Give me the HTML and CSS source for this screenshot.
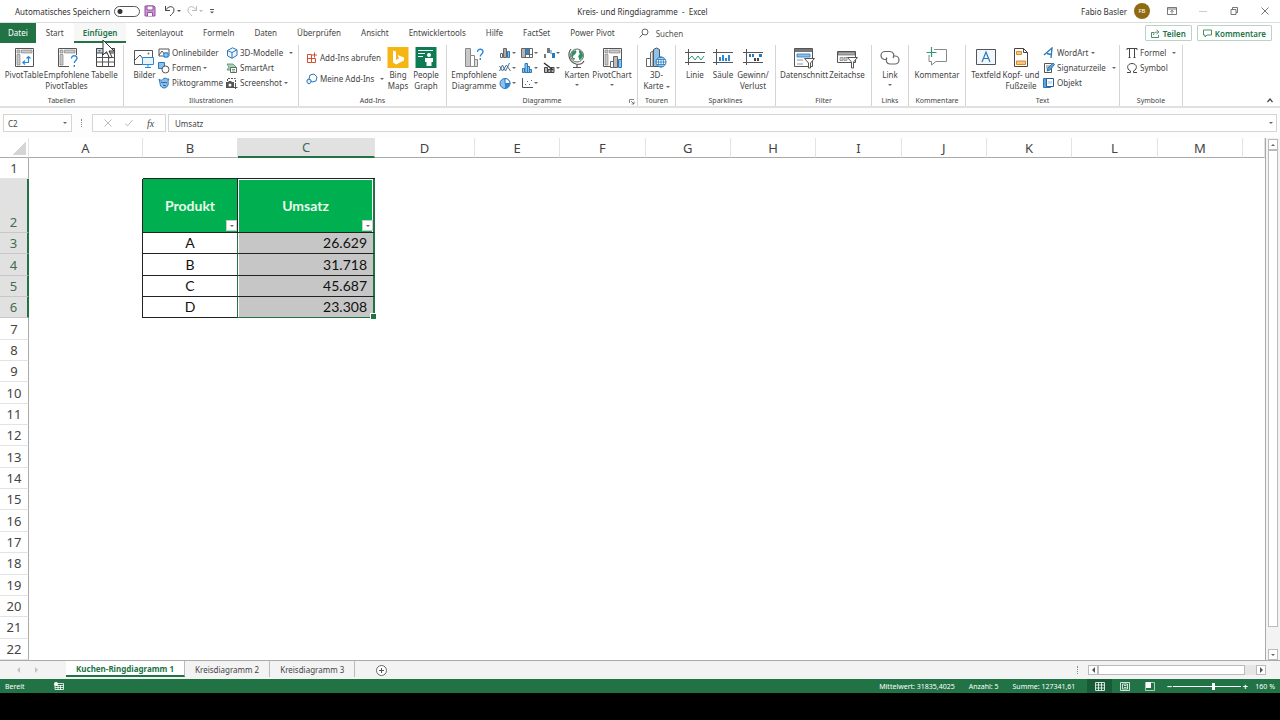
FILE: index.html
```html
<!DOCTYPE html>
<html lang="de">
<head>
    <meta charset="UTF-8">
    <meta name="viewport" content="width=device-width, initial-scale=1.0">
    <title>Kreis- und Ringdiagramme - Excel</title>
    <link rel="stylesheet" href="styles.css">
</head>
<body>

<!-- Titelleiste -->
<header class="titlebar">
    <div class="quick">
        <label for="autosave">Automatisches Speichern</label>
        <input type="checkbox" id="autosave" class="toggle">
        <button class="icon-btn save" aria-label="Speichern">
            <svg width="12" height="12" viewBox="0 0 12 12"><path d="M1 1h9l1 1v9H1z" fill="#c79ad0" stroke="#9b4fa5"/><path d="M3 1h6v4H3z" fill="#fff" stroke="#9b4fa5"/><path d="M3.500 11V7.500h5V11" fill="#fff" stroke="#9b4fa5"/></svg>
        </button>
        <button class="icon-btn" aria-label="Rückgängig">
            <svg width="18" height="12" viewBox="0 0 18 12"><path d="M1.500 1v4.500H6M1.500 5.500C4 .5 10 .5 10 5c0 2.500-2 4-4 6" fill="none" stroke="#444"/><path d="M13 5h4l-2 2z" fill="#555"/></svg>
        </button>
        <button class="icon-btn" aria-label="Wiederholen">
            <svg width="18" height="12" viewBox="0 0 18 12"><path d="M10.500 1v4.500H6M10.500 5.500C8 .5 2 .5 2 5c0 2.500 2 4 4 6" fill="none" stroke="#bbb"/><path d="M13 5h4l-2 2z" fill="#bbb"/></svg>
        </button>
        <button class="icon-btn" aria-label="Symbolleiste anpassen">
            <svg width="8" height="8" viewBox="0 0 8 8"><path d="M2 2.500h4" stroke="#555"/><path d="M2 4.500h4l-2 2z" fill="#555"/></svg>
        </button>
    </div>
    <div class="doc-title">Kreis- und Ringdiagramme&nbsp; -&nbsp; Excel</div>
    <div class="account">
        <span>Fabio Basler</span>
        <span class="avatar">FB</span>
        <button class="icon-btn" aria-label="Menüband anzeigen">
            <svg width="10" height="8" viewBox="0 0 10 8"><path d="M.5.500h9v7h-9zM.5 2h9M5 6.500V3.500M3.500 4.800 5 3.300l1.500 1.500" fill="none" stroke="#555" stroke-width=".8"/></svg>
        </button>
        <button class="icon-btn" aria-label="Minimieren">
            <svg width="10" height="8" viewBox="0 0 10 8"><path d="M1 4.500h8" stroke="#ccc"/></svg>
        </button>
        <button class="icon-btn" aria-label="Verkleinern">
            <svg width="10" height="8" viewBox="0 0 10 8"><path d="M2 2.500h5v5H2zM3.500 2.500v-2h5v5H7" fill="none" stroke="#555" stroke-width=".8"/></svg>
        </button>
        <button class="icon-btn" aria-label="Schließen">
            <svg width="10" height="8" viewBox="0 0 10 8"><path d="m1.500.500 7 7m0-7-7 7" stroke="#555" stroke-width=".8"/></svg>
        </button>
    </div>
</header>

<!-- Registerkarten -->
<nav class="tabs">
    <button class="tab file">Datei</button>
    <button class="tab">Start</button>
    <button class="tab active">Einfügen
        <svg class="cursor" width="13" height="21" viewBox="0 0 13 21"><path d="M1 1v15l3.500-3.300L7.500 19l2.400-1.100L7 12h5z" fill="#fff" stroke="#333"/></svg>
    </button>
    <button class="tab">Seitenlayout</button>
    <button class="tab">Formeln</button>
    <button class="tab">Daten</button>
    <button class="tab">Überprüfen</button>
    <button class="tab">Ansicht</button>
    <button class="tab">Entwicklertools</button>
    <button class="tab">Hilfe</button>
    <button class="tab">FactSet</button>
    <button class="tab">Power Pivot</button>
    <label class="search">
        <svg width="10" height="10" viewBox="0 0 10 10"><circle cx="6" cy="4" r="3" fill="none" stroke="#666"/><path d="M4 6 .5 9.500" stroke="#666"/></svg>
        <input type="text" placeholder="Suchen" aria-label="Suchen">
    </label>
    <div class="share">
        <button class="share-btn">
            <svg width="9" height="9" viewBox="0 0 9 9"><path d="M3 3.500H.5v5h7V6M2.500 6c0-2 1.500-3 4-3M5.500 1l2.500 2-2.500 2" fill="none" stroke="#217346" stroke-width=".8"/></svg>
            Teilen
        </button>
        <button class="share-btn">
            <svg width="9" height="9" viewBox="0 0 9 9"><path d="M.5 1h8v5H4L2 8V6H.5z" fill="none" stroke="#217346" stroke-width=".8"/></svg>
            Kommentare
        </button>
    </div>
</nav>

<!-- Menüband -->
<div class="ribbon">
    <section class="group">
        <div class="group-body tables">
            <button class="big">
                <svg width="22" height="22" viewBox="0 0 22 22"><path d="M2.500 1.500h18v18h-18z" fill="#fff" stroke="#555"/><path d="M4 3h3v3H4zM8.500 3H19v3H8.500zM4 7.500h3V18H4z" fill="#c8c8c8" stroke="#777" stroke-width=".6"/><path d="M10 15.500h5.500V10M12 13.500l-2.200 2 2.200 2M13.500 11.500l2-2 2 2" fill="none" stroke="#2b88d8" stroke-width="1.200"/></svg>
                <span>PivotTable</span>
            </button>
            <button class="big">
                <svg width="22" height="22" viewBox="0 0 22 22"><path d="M13 19.500H2.500v-18h18V8" fill="#fff" stroke="#555"/><path d="M4 3h3v3H4zM8.500 3H19v3H8.500zM4 7.500h3V18H4z" fill="#c8c8c8" stroke="#777" stroke-width=".6"/><path d="M15.500 11.500c0-4 6-3.500 5.500 0-.3 2-2.700 2-2.700 4.500M18.300 18v2" fill="none" stroke="#2b88d8" stroke-width="1.400"/></svg>
                <span>Empfohlene PivotTables</span>
            </button>
            <button class="big">
                <svg width="22" height="22" viewBox="0 0 22 22"><path d="M2.500 1.500h18v18h-18z" fill="#fff" stroke="#444"/><path d="M2.500 1.500h18V6h-18z" fill="#cfcfcf" stroke="#444"/><path d="M2.500 10.500h18M2.500 15h18M8.500 6v13.500M14.500 6v13.500" stroke="#555"/><path d="M4 3h3L5.500 5z" fill="#2b88d8"/></svg>
                <span>Tabelle</span>
            </button>
        </div>
        <h2>Tabellen</h2>
    </section>

    <section class="group">
        <div class="group-body pictures">
            <button class="big">
                <svg width="22" height="22" viewBox="0 0 22 22"><path d="M1.500 3.500h18v14h-18z" fill="#fff" stroke="#555"/><path d="M2 13l5-5 4 5 2-2" fill="none" stroke="#555"/><circle cx="15.500" cy="6.500" r="1" fill="#777"/><path d="M9.500 10.500h11v7h-11z" fill="#e8f3fc" stroke="#2b88d8"/><path d="M15 17.500V20M12 20.500h6" stroke="#2b88d8"/></svg>
                <span>Bilder</span>
            </button>
            <div class="stack">
                <button class="small">
                    <svg width="12" height="12" viewBox="0 0 12 12"><path d="M1 2h10v7H1z" fill="#fff" stroke="#555"/><path d="m1 8 3-4 3 4" fill="none" stroke="#555"/><circle cx="8" cy="8" r="3" fill="#2b88d8"/><path d="M5.500 8h5M8 5.500v5" stroke="#fff" stroke-width=".6"/></svg>
                    Onlinebilder
                </button>
                <button class="small">
                    <svg width="12" height="12" viewBox="0 0 12 12"><path d="M.5.500h6v6h-6z" fill="#8ec2ee" stroke="#2b78b8"/><circle cx="7.500" cy="7.500" r="3.500" fill="#fff" stroke="#555"/></svg>
                    Formen <i class="caret"></i>
                </button>
                <button class="small">
                    <svg width="12" height="12" viewBox="0 0 12 12"><path d="M1 2c2 2 4 1 4 0l2-1 2 1 2 0-1 2c1 4-1 7-4 7-3 0-4-3-4-5z" fill="#8ec2ee" stroke="#2b78b8"/><path d="M3 5c3 2 3-1 6 1M5 8l3 1" fill="none" stroke="#2b5f90"/></svg>
                    Piktogramme
                </button>
            </div>
            <div class="stack">
                <button class="small">
                    <svg width="12" height="12" viewBox="0 0 12 12"><path d="m6.500.800 4.500 2v5.500l-5 3-4.500-2.500V3.500zM1.500 3.500 6 5.500l5-2.700M6 5.500v5.800" fill="#eef6fd" stroke="#2b78b8"/></svg>
                    3D-Modelle <i class="caret far"></i>
                </button>
                <button class="small">
                    <svg width="12" height="12" viewBox="0 0 12 12"><path d="M1 2h6l3 3-3 3H1l2-3z" fill="#a8d5b8" stroke="#4a8a66" stroke-width=".8"/><path d="M4.500 5.500h6v5h-6z" fill="#fff" stroke="#666"/><path d="M6 7.500h3M6 9h3" stroke="#3a9a66" stroke-width=".8"/></svg>
                    SmartArt
                </button>
                <button class="small">
                    <svg width="12" height="12" viewBox="0 0 12 12"><path d="M1.500 4V1.500h8V8" fill="none" stroke="#555" stroke-dasharray="2 1"/><path d="M0 5h2l1-1h2l1 1h2v6H0z" fill="#555"/><circle cx="4" cy="8" r="1.500" fill="#fff"/><path d="M9.500 8v4M7.500 10.500h4" stroke="#555"/></svg>
                    Screenshot <i class="caret"></i>
                </button>
            </div>
        </div>
        <h2>Illustrationen</h2>
    </section>

    <section class="group">
        <div class="group-body addins">
            <div class="stack wide">
                <button class="small">
                    <svg width="12" height="12" viewBox="0 0 12 12"><path d="M1.500 2.500H5.500v8H1.500zM1.500 6.500h8v4h-4M8.500.500v5M6 3h5" fill="none" stroke="#d2502f"/></svg>
                    Add-Ins abrufen
                </button>
                <button class="small">
                    <svg width="12" height="12" viewBox="0 0 12 12"><path d="m4 2 4-1 3 3-1 4-4 1-3-3z" fill="#fff" stroke="#2b78b8"/><path d="m1 7 2-1 2 1v2.500L3 11l-2-1.500z" fill="#dcecf9" stroke="#2b78b8"/></svg>
                    Meine Add-Ins <i class="caret far"></i>
                </button>
            </div>
            <button class="big">
                <svg width="22" height="22" viewBox="0 0 22 22"><path d="M.5 0h21v21H.5z" fill="#f5b513"/><path d="m6 3.500 3 1V13l3-1.500-1.500-3.500 6.500 2.500v3L9 17.500l-3-2z" fill="#fff"/></svg>
                <span>Bing Maps</span>
            </button>
            <button class="big">
                <svg width="22" height="22" viewBox="0 0 22 22"><path d="M.5 0h21v21H.5z" fill="#0e7c53"/><path d="M3 3.500h15M3 6.500h7M3 9.500h5" stroke="#fff"/><circle cx="14" cy="8" r="2" fill="#fff"/><path d="M10 11h8v4h-1.500v4h-5v-4H10z" fill="#fff"/></svg>
                <span>People Graph</span>
            </button>
        </div>
        <h2>Add-Ins</h2>
    </section>

    <section class="group">
        <div class="group-body charts">
            <button class="big">
                <svg width="22" height="22" viewBox="0 0 22 22"><path d="M2.500 1.500h5v18h-5z" fill="#c8c8c8" stroke="#888"/><path d="M7.500 8.500h4v11h-4z" fill="#fff" stroke="#888"/><path d="M11.500 12.500h3v7h-3z" fill="#ddd" stroke="#888"/><path d="M14.500 5c0-4 6-3.500 5.500 0-.3 2-2.700 2-2.700 4.500M17.300 11v2" fill="none" stroke="#2b88d8" stroke-width="1.400"/></svg>
                <span>Empfohlene Diagramme</span>
            </button>
            <div class="chart-grid">
                <button class="mini" aria-label="Säulendiagramm"><svg width="12" height="12" viewBox="0 0 12 12"><path d="M1.500 6.500h2v4h-2z" fill="#fff" stroke="#666"/><path d="M4.500 1.500h3v9h-3z" fill="#aaa" stroke="#666"/><path d="M8.500 4.500h2v6h-2z" fill="#8ec2ee" stroke="#2b78b8"/></svg><i class="caret"></i></button>
                <button class="mini" aria-label="Hierarchiediagramm"><svg width="12" height="12" viewBox="0 0 12 12"><path d="M.5 1.500h11v9H.5z" fill="#fff" stroke="#666"/><path d="M1 2h3v8H1z" fill="#b5b5b5"/><path d="M5 2h3v5H5z" fill="#2b88d8"/><path d="M4.500 1.500v9M8.500 1.500v9M4.500 7.500h7" stroke="#666"/></svg><i class="caret"></i></button>
                <button class="mini" aria-label="Wasserfalldiagramm"><svg width="12" height="12" viewBox="0 0 12 12"><path d="M1 7h2v4H1zM4 1h3v5H4z" fill="#777"/><path d="M7 3h2v4H7z" fill="#8ec2ee"/><path d="M9 6h3v5H9z" fill="#2b78b8"/></svg><i class="caret"></i></button>
                <button class="mini" aria-label="Liniendiagramm"><svg width="12" height="12" viewBox="0 0 12 12"><path d="m.5 9 3-6 3 6 4-8" fill="none" stroke="#2b78b8"/><path d="m.5 4 3 5 4-6 4 6" fill="none" stroke="#666"/></svg><i class="caret"></i></button>
                <button class="mini" aria-label="Statistikdiagramm"><svg width="12" height="12" viewBox="0 0 12 12"><path d="M1.500 6.500h2v4h-2zM4 1.500h2.500v9H4zM6.500 4.500h2v6h-2zM8.500 7.500h2v3h-2z" fill="#8ec2ee" stroke="#2b78b8"/></svg><i class="caret"></i></button>
                <button class="mini" aria-label="Kombidiagramm"><svg width="12" height="12" viewBox="0 0 12 12"><path d="M1.500 5.500h3v5h-3zM5 7.500h3v3H5zM8 5.500h3v5H8z" fill="#bbb" stroke="#444"/><path d="m1 1 4 3 5 4" fill="none" stroke="#333" stroke-width="1.500"/></svg><i class="caret"></i></button>
                <button class="mini" aria-label="Kreisdiagramm"><svg width="12" height="12" viewBox="0 0 12 12"><circle cx="6" cy="6.500" r="5" fill="#8ec2ee" stroke="#2b78b8"/><path d="M6 1.500v5h5A5 5 0 0 0 6 1.500z" fill="#fff" stroke="#2b78b8"/><path d="M6 6.500h5A5 5 0 0 1 6 11.500z" fill="#2b88d8"/></svg><i class="caret"></i></button>
                <button class="mini" aria-label="Punktdiagramm"><svg width="12" height="12" viewBox="0 0 12 12"><path d="M1.500 1v9.500H12" fill="none" stroke="#555"/><path d="M4 7h1v1H4zM6 4h1v1H6zM8 7h1v1H8zM10 3h1v1h-1z" fill="#2b78b8"/></svg><i class="caret"></i></button>
            </div>
            <button class="big">
                <svg width="22" height="22" viewBox="0 0 22 22"><circle cx="11" cy="8.500" r="6.500" fill="#fff" stroke="#666"/><path d="M7 4c3-2 4 0 3 2s-3 2-3 4 2 0 2 2l-1 1C5 11 4 7 7 4zM13 3c3 1 4 4 4 6-1 2-2 4-4 4 1-2-2-3 0-5 2-1-1-3 0-5z" fill="#2f8f60"/><path d="M5 2C1 7 3 15 10 17c4 1 7-1 8-3M11 17v3M7 20.500h8" fill="none" stroke="#555" stroke-width="1.200"/></svg>
                <span>Karten</span><i class="caret"></i>
            </button>
            <button class="big">
                <svg width="22" height="22" viewBox="0 0 22 22"><path d="M2.500 1.500h18v18h-18z" fill="#fff" stroke="#555"/><path d="M4 3h3v3H4zM8.500 3H19v3H8.500zM4 7.500h3V18H4z" fill="#c8c8c8" stroke="#777" stroke-width=".6"/><path d="M9.500 14.500h3v6h-3z" fill="#fff" stroke="#666"/><path d="M12.500 9.500h4v11h-4z" fill="#bbb" stroke="#666"/><path d="M17.500 12.500h3v8h-3z" fill="#8ec2ee" stroke="#2b78b8"/></svg>
                <span>PivotChart</span><i class="caret"></i>
            </button>
        </div>
        <h2>Diagramme</h2>
        <button class="launcher" aria-label="Alle Diagramme">
            <svg width="6" height="6" viewBox="0 0 6 6"><path d="M.5 4V.500H5M2 2l3 3M5 2.500V5H2.500" fill="none" stroke="#666" stroke-width=".8"/></svg>
        </button>
    </section>

    <section class="group">
        <div class="group-body">
            <button class="big">
                <svg width="22" height="22" viewBox="0 0 22 22"><path d="M1.500 11.500h4v8h-4z" fill="#fff" stroke="#666"/><path d="M5.500 5.500 8 4v15.500H5.500z" fill="#eee" stroke="#666"/><path d="m8.500 2.500 3-1.500 3 1.500v17h-6z" fill="#8ec2ee" stroke="#555"/><circle cx="16" cy="15" r="5" fill="#fff" stroke="#2b78b8"/><path d="M11 15h10M16 10v10M12 12.500h8M12 17.500h8" stroke="#2b78b8" stroke-width=".8"/><ellipse cx="16" cy="15" rx="2.500" ry="5" fill="none" stroke="#2b78b8" stroke-width=".8"/></svg>
                <span class="lines">3D-<br>Karte <i class="caret"></i></span>
            </button>
        </div>
        <h2>Touren</h2>
    </section>

    <section class="group">
        <div class="group-body sparks">
            <button class="big">
                <svg width="22" height="22" viewBox="0 0 22 22"><path d="M1 5.500h20M1 15.500h20M4.500 2v16" stroke="#555"/><path d="m5 12 3-3 3 4 3-4 3 4 3-4" fill="none" stroke="#2f9a70"/></svg>
                <span>Linie</span>
            </button>
            <button class="big">
                <svg width="22" height="22" viewBox="0 0 22 22"><path d="M1 5.500h20M1 15.500h20M4.500 2v16" stroke="#555"/><path d="M7 10h2v4H7zM10 8h2v6h-2zM13 11h2v3h-2zM16 8h2v6h-2z" fill="#2b88d8"/></svg>
                <span>Säule</span>
            </button>
            <button class="big">
                <svg width="22" height="22" viewBox="0 0 22 22"><path d="M1 5.500h20M1 15.500h20M4.500 2v16" stroke="#555"/><path d="M7 7h2v3H7zM10 7h2v3h-2zM17 7h3v3h-3z" fill="#2b78b8"/><path d="M12 11h2v3h-2zM15 11h2v3h-2z" fill="#444"/></svg>
                <span>Gewinn/ Verlust</span>
            </button>
        </div>
        <h2>Sparklines</h2>
    </section>

    <section class="group">
        <div class="group-body filters">
            <button class="big">
                <svg width="22" height="22" viewBox="0 0 22 22"><path d="M1.500 1.500h18v18h-18z" fill="#fff" stroke="#555"/><path d="M2 2h17v3H2z" fill="#777"/><path d="M4 7h13v3H4z" fill="#8ec2ee" stroke="#2b78b8" stroke-width=".8"/><path d="M4 12h6v2H4zM4 16h6v2H4z" fill="#c8c8c8"/><path d="M11.500 11.500h10l-4 4.500v5h-2v-5z" fill="#fff" stroke="#555"/></svg>
                <span>Datenschnitt</span>
            </button>
            <button class="big">
                <svg width="22" height="22" viewBox="0 0 22 22"><path d="M1.500 4.500h18v11h-18z" fill="#fff" stroke="#555"/><path d="M2 5h17v3H2z" fill="#aaa" stroke="#555" stroke-width=".6"/><path d="M4 10.500h3v3H4zM8 10.500h3v3H8z" fill="#ccc" stroke="#777" stroke-width=".6"/><path d="M11.500 10.500h10l-4 4.500v6h-2v-6z" fill="#fff" stroke="#555"/></svg>
                <span>Zeitachse</span>
            </button>
        </div>
        <h2>Filter</h2>
    </section>

    <section class="group">
        <div class="group-body">
            <button class="big">
                <svg width="22" height="22" viewBox="0 0 22 22"><path d="M8 12.500H6a4 4 0 0 1 0-8h5a4 4 0 0 1 3 6.500M14 9h2a4 4 0 0 1 0 8h-5a4 4 0 0 1-3-6.500" fill="none" stroke="#666" stroke-width="1.200"/></svg>
                <span>Link</span><i class="caret"></i>
            </button>
        </div>
        <h2>Links</h2>
    </section>

    <section class="group">
        <div class="group-body">
            <button class="big">
                <svg width="22" height="22" viewBox="0 0 22 22"><path d="M8 2.500h12.500v12H10L5.500 18v-3.500H3V8" fill="#fff" stroke="#888"/><path d="M5.500 0v10M.5 5.500h10" stroke="#2f9a70" stroke-width="1.200"/></svg>
                <span>Kommentar</span>
            </button>
        </div>
        <h2>Kommentare</h2>
    </section>

    <section class="group">
        <div class="group-body texts">
            <button class="big">
                <svg width="22" height="22" viewBox="0 0 22 22"><path d="M1.500 2.500h19v15h-19z" fill="#f1f7fc" stroke="#555"/><path d="m7 15 4-10 4 10M8.500 11.500h5" fill="none" stroke="#2b78b8" stroke-width="1.200"/></svg>
                <span>Textfeld</span>
            </button>
            <button class="big">
                <svg width="22" height="22" viewBox="0 0 22 22"><path d="M4.500 1.500h9l4 4v14h-13z" fill="#fff" stroke="#444"/><path d="M13.500 1.500v4h4" fill="none" stroke="#444"/><path d="M6.500 4.500h5v3h-5zM6.500 14h9v3.500h-9z" fill="#f7c68a" stroke="#e08a1e"/></svg>
                <span class="lines">Kopf- und<br>Fußzeile</span>
            </button>
            <div class="stack">
                <button class="small">
                    <svg width="12" height="12" viewBox="0 0 12 12"><path d="M1 8 9 1 8 11M4 6.500l4 1" fill="none" stroke="#2b78b8" stroke-width="1.300"/></svg>
                    WordArt <i class="caret"></i>
                </button>
                <button class="small">
                    <svg width="12" height="12" viewBox="0 0 12 12"><path d="M1.500 1.500h7v9h-7z" fill="#fff" stroke="#555"/><path d="M3 4h4M3 6h3" stroke="#777"/><path d="m4 9 1-3 5-5 1.500 1.500L7 8z" fill="#5aa5e0" stroke="#2b78b8"/></svg>
                    Signaturzeile <i class="caret far"></i>
                </button>
                <button class="small">
                    <svg width="12" height="12" viewBox="0 0 12 12"><path d="M.5 1.500h7v9h-7z" fill="#5aa5e0" stroke="#2b78b8"/><path d="M3.500 1.500h7v8h-7z" fill="#fff" stroke="#2b5f90"/><path d="M5 4h4v3H5z" fill="#c8ddf0"/></svg>
                    Objekt
                </button>
            </div>
        </div>
        <h2>Text</h2>
    </section>

    <section class="group">
        <div class="group-body symbols">
            <div class="stack">
                <button class="small">
                    <svg width="12" height="12" viewBox="0 0 12 12"><path d="M1 3V1.500h10V3M3.500 1.500v9M8.500 1.500v9M2.500 10.500h2M7.500 10.500h2" fill="none" stroke="#444"/></svg>
                    Formel <i class="caret far"></i>
                </button>
                <button class="small">
                    <svg width="12" height="12" viewBox="0 0 12 12"><path d="M1 10.500h3.500V9C0 7 1 1.500 6 1.500S12 7 7.500 9v1.500H11" fill="none" stroke="#444"/></svg>
                    Symbol
                </button>
            </div>
        </div>
        <h2>Symbole</h2>
    </section>

    <button class="collapse" aria-label="Menüband reduzieren">
        <svg width="6" height="5" viewBox="0 0 6 5"><path d="m.5 4 2.500-3 2.500 3" fill="none" stroke="#444" stroke-width="1.200"/></svg>
    </button>
</div>

<!-- Bearbeitungsleiste -->
<div class="formula-bar">
    <div class="name-box">
        <input type="text" value="C2" aria-label="Namenfeld">
        <i class="caret"></i>
    </div>
    <span class="dots"></span>
    <div class="fx">
        <button class="icon-btn" aria-label="Abbrechen"><svg width="8" height="8" viewBox="0 0 8 8"><path d="m.5.500 7 7m0-7-7 7" stroke="#bbb"/></svg></button>
        <button class="icon-btn" aria-label="Eingeben"><svg width="8" height="8" viewBox="0 0 8 8"><path d="m.5 4.500 2 2.500 5-6" fill="none" stroke="#bbb"/></svg></button>
        <button class="icon-btn fn" aria-label="Funktion einfügen">fx</button>
    </div>
    <div class="formula">
        <input type="text" value="Umsatz" aria-label="Bearbeitungsleiste">
        <i class="caret"></i>
    </div>
</div>

<!-- Tabellenblatt -->
<main class="sheet">
    <div class="grid-area">
    <table class="grid">
        <colgroup>
            <col class="col-num"><col class="col-a"><col class="col-b"><col class="col-c"><col class="col-d">
            <col span="9"><col class="col-rest">
        </colgroup>
        <tr class="letters">
            <th class="corner"></th>
            <th>A</th><th>B</th><th class="sel">C</th><th>D</th><th>E</th><th>F</th><th>G</th>
            <th>H</th><th>I</th><th>J</th><th>K</th><th>L</th><th>M</th><th></th>
        </tr>
        <tr class="first"><th>1</th><td></td><td class="above"></td><td class="above"></td><td colspan="11"></td></tr>
        <tr class="head sel">
            <th>2</th><td class="edge"></td>
            <td class="title">Produkt<button class="filter" aria-label="Produkt filtern"><i class="caret"></i></button></td>
            <td class="title picked">Umsatz<button class="filter" aria-label="Umsatz filtern"><i class="caret"></i></button></td>
            <td colspan="11"></td>
        </tr>
        <tr class="sel"><th>3</th><td class="edge"></td><td class="name">A</td><td class="value">26.629</td><td colspan="11"></td></tr>
        <tr class="sel"><th>4</th><td class="edge"></td><td class="name">B</td><td class="value">31.718</td><td colspan="11"></td></tr>
        <tr class="sel"><th>5</th><td class="edge"></td><td class="name">C</td><td class="value">45.687</td><td colspan="11"></td></tr>
        <tr class="sel"><th>6</th><td class="edge"></td><td class="name">D</td><td class="value last">23.308</td><td colspan="11"></td></tr>
        <tr><th>7</th><td colspan="14"></td></tr>
        <tr><th>8</th><td colspan="14"></td></tr>
        <tr><th>9</th><td colspan="14"></td></tr>
        <tr><th>10</th><td colspan="14"></td></tr>
        <tr><th>11</th><td colspan="14"></td></tr>
        <tr><th>12</th><td colspan="14"></td></tr>
        <tr><th>13</th><td colspan="14"></td></tr>
        <tr><th>14</th><td colspan="14"></td></tr>
        <tr><th>15</th><td colspan="14"></td></tr>
        <tr><th>16</th><td colspan="14"></td></tr>
        <tr><th>17</th><td colspan="14"></td></tr>
        <tr><th>18</th><td colspan="14"></td></tr>
        <tr><th>19</th><td colspan="14"></td></tr>
        <tr><th>20</th><td colspan="14"></td></tr>
        <tr><th>21</th><td colspan="14"></td></tr>
        <tr><th>22</th><td colspan="14"></td></tr>
    </table>
    </div>
    <div class="vscroll">
        <button class="arrow" aria-label="Nach oben"><i class="caret up"></i></button>
        <div class="thumb"></div>
        <button class="arrow" aria-label="Nach unten"><i class="caret"></i></button>
    </div>
</main>

<!-- Blattregister -->
<div class="sheet-tabs">
    <div class="sheet-nav">
        <button class="icon-btn" aria-label="Vorheriges Blatt"><i class="caret left"></i></button>
        <button class="icon-btn" aria-label="Nächstes Blatt"><i class="caret right"></i></button>
    </div>
    <button class="sheet-tab active">Kuchen-Ringdiagramm 1</button>
    <button class="sheet-tab">Kreisdiagramm 2</button>
    <button class="sheet-tab">Kreisdiagramm 3</button>
    <button class="icon-btn add" aria-label="Neues Blatt">
        <svg width="11" height="11" viewBox="0 0 11 11"><circle cx="5.500" cy="5.500" r="5" fill="#fff" stroke="#666"/><path d="M5.500 3v5M3 5.500h5" stroke="#555"/></svg>
    </button>
    <span class="dots"></span>
    <div class="hscroll">
        <button class="arrow" aria-label="Nach links"><i class="caret left"></i></button>
        <div class="track"><div class="thumb"></div></div>
        <button class="arrow" aria-label="Nach rechts"><i class="caret right"></i></button>
    </div>
</div>

<!-- Statusleiste -->
<footer class="status">
    <span>Bereit</span>
    <svg class="macro" width="10" height="8" viewBox="0 0 10 8"><path d="M1 1.500h8.500v6H1zM1 3.500h8.500M1 5.500h8.500M4 3v5M6.500 3v5" fill="none" stroke="#fff" stroke-width=".8"/><circle cx="2" cy="2" r="2" fill="#fff"/></svg>
    <div class="stats">
        <span>Mittelwert: 31835,4025</span>
        <span>Anzahl: 5</span>
        <span>Summe: 127341,61</span>
    </div>
    <div class="views">
        <button class="view active" aria-label="Normal"><svg width="10" height="9" viewBox="0 0 10 9"><path d="M.5.500h9v8h-9zM.5 3h9M.5 6h9M3.500.500v8M6.500.500v8" fill="none" stroke="#fff" stroke-width=".8"/></svg></button>
        <button class="view" aria-label="Seitenlayout"><svg width="10" height="9" viewBox="0 0 10 9"><path d="M.5.500h9v8h-9zM2.500 2h5v5h-5zM4 3.500h2.500M4 5.500h2.500" fill="none" stroke="#fff" stroke-width=".8"/></svg></button>
        <button class="view" aria-label="Umbruchvorschau"><svg width="10" height="9" viewBox="0 0 10 9"><path d="M.5.500h9v8h-9z" fill="none" stroke="#cfe3d7" stroke-width=".8"/><path d="M1 0h5v6H1z" fill="#fff"/></svg></button>
    </div>
    <button class="zoom-step" aria-label="Verkleinern">−</button>
    <input type="range" class="zoom" min="0" max="100" value="60" aria-label="Zoom">
    <button class="zoom-step" aria-label="Vergrößern">+</button>
    <span class="percent">160 %</span>
</footer>

</body>
</html>
```
FILE: styles.css
```css
* {
    box-sizing: border-box;
}
body {
    margin: 0;
    height: 100vh;
    padding-bottom: 27px;
    display: flex;
    flex-direction: column;
    overflow: hidden;
    background-color: #000;
    color: #444;
    font-family: "Noto Sans", "Open Sans", sans-serif;
    font-size: 8px;
    line-height: 11px;
}
button, input {
    margin: 0;
    padding: 0;
    border: none;
    background: none;
    color: inherit;
    font: inherit;
    outline: none;
}
svg {
    display: block;
    flex: none;
}
.icon-btn {
    display: flex;
    align-items: center;
    justify-content: center;
}

/* kleine Dreiecke */
.caret {
    display: inline-block;
    flex: none;
    border: 2px solid transparent;
    border-top-color: #666;
    border-bottom-width: 0;
    vertical-align: middle;
}
.caret.up {
    border: 2px solid transparent;
    border-bottom-color: #666;
    border-top-width: 0;
}
.caret.left {
    border: 3px solid transparent;
    border-right-color: #555;
    border-left-width: 0;
}
.caret.right {
    border: 3px solid transparent;
    border-left-color: #555;
    border-right-width: 0;
}

/* Titelleiste */
.titlebar {
    flex: none;
    height: 23px;
    display: grid;
    grid-template-columns: 1fr auto 1fr;
    align-items: center;
    padding: 0 10px 0 15px;
    background-color: #fff;
    border-bottom: 1px solid #ddd;
    color: #333;
}
.quick, .account {
    display: flex;
    align-items: center;
}
.quick {
    gap: 4px;
}
.toggle {
    appearance: none;
    width: 26px;
    height: 11px;
    border: 1px solid #555;
    border-radius: 6px;
    background: radial-gradient(circle at 5px 50%, #333 2px, transparent 3px);
}
.save {
    margin-right: 4px;
}
.account {
    justify-content: flex-end;
    gap: 21px;
}
.avatar {
    width: 16px;
    height: 16px;
    margin: 0 -4px 0 -14px;
    border-radius: 50%;
    background-color: #8f6a10;
    color: #fff;
    font-size: 6px;
    line-height: 16px;
    text-align: center;
}

/* Registerkarten */
.tabs {
    flex: none;
    height: 20px;
    display: flex;
    align-items: stretch;
    padding-right: 8px;
    background-color: #fff;
}
.tab {
    position: relative;
    padding: 0 10px;
    border-bottom: 2px solid transparent;
    white-space: nowrap;
}
.tab.file {
    padding: 0 8px;
    background-color: #217346;
    color: #fff;
    border-bottom-color: #217346;
}
.tab.active {
    padding: 0 9px;
    background-color: #f7f7f7;
    color: #217346;
    border-bottom-color: #217346;
    font-weight: 600;
}
.cursor {
    position: absolute;
    left: 28px;
    top: 16px;
    z-index: 2;
}
.search {
    display: flex;
    align-items: center;
    gap: 7px;
    margin-left: 14px;
}
.search input {
    width: 60px;
}
.search input::placeholder {
    color: #555;
    opacity: 1;
}
.share {
    display: flex;
    align-items: center;
    gap: 5px;
    margin-left: auto;
}
.share-btn {
    display: flex;
    align-items: center;
    gap: 3px;
    height: 16px;
    padding: 0 5px;
    border: 1px solid #b9d3c4;
    border-radius: 1px;
    color: #217346;
    font-weight: 600;
}

/* Menüband */
.ribbon {
    flex: none;
    height: 65px;
    display: grid;
    grid-template-columns: 124px 175px 148px 191px 38px 100px 96px 37px 57px 154px 63px 1fr;
    background-color: #fff;
    border-bottom: 2px solid #e1e1e1;
}
.group {
    position: relative;
    display: flex;
    flex-direction: column;
    justify-content: space-between;
    margin: 2px 0 0;
    border-right: 1px solid #d5d5d5;
}
.group h2 {
    margin: 0;
    font-size: 7px;
    font-weight: 400;
    line-height: 10px;
    text-align: center;
}
.group-body {
    display: grid;
}
.tables {
    grid-template-columns: 40px 45px 31px;
    padding-left: 4px;
}
.pictures {
    grid-template-columns: 27px 68px 1fr;
    padding-left: 7px;
}
.addins {
    grid-template-columns: 78px 28px 28px;
    padding-left: 7px;
}
.charts {
    grid-template-columns: 44px 66px 30px 40px;
    padding-left: 5px;
}
.sparks {
    grid-template-columns: 28px 28px 32px;
    padding-left: 5px;
}
.filters {
    grid-template-columns: 46px 40px;
    padding-left: 5px;
}
.texts {
    grid-template-columns: 34px 36px 1fr;
    padding-left: 3px;
}
.texts .stack {
    padding-left: 4px;
}
.symbols {
    padding-left: 6px;
}
.big {
    display: flex;
    flex-direction: column;
    align-items: center;
    justify-self: center;
    align-self: start;
    width: min-content;
    padding-top: 2px;
    text-align: center;
}
.big > .caret {
    margin-top: 4px;
}
.lines {
    white-space: nowrap;
}
.stack {
    display: flex;
    flex-direction: column;
}
.stack.wide {
    gap: 6px;
    padding-top: 5px;
}
.small {
    display: flex;
    align-items: center;
    gap: 2px;
    height: 15px;
    white-space: nowrap;
}
.small .far {
    margin-left: 4px;
}
.chart-grid {
    display: grid;
    grid-template-columns: repeat(3, 22px);
    grid-auto-rows: 15px;
    align-content: start;
    padding-left: 3px;
}
.mini {
    display: flex;
    align-items: center;
    gap: 1px;
}
.launcher {
    position: absolute;
    right: 2px;
    bottom: 1px;
}
.collapse {
    justify-self: end;
    align-self: end;
    padding: 0 7px 3px 0;
}

/* Bearbeitungsleiste */
.formula-bar {
    flex: none;
    height: 30px;
    display: flex;
    align-items: flex-start;
    padding: 6px 3px 0;
    background-color: #fdfdfd;
}
.name-box, .fx, .formula {
    height: 18px;
    display: flex;
    align-items: center;
    padding: 0 4px;
    border: 1px solid #d5d5d5;
    background-color: #fff;
}
.name-box {
    width: 69px;
}
.name-box input, .formula input {
    flex: 1;
    min-width: 0;
}
.formula {
    flex: 1;
    margin-left: 2px;
    padding: 0 3px 0 6px;
}
.dots {
    width: 2px;
    height: 8px;
    margin: 5px 9px 0;
    border-left: 1px dotted #888;
}
.fx {
    width: 74px;
    justify-content: space-around;
}
.fn {
    font-family: "Liberation Serif", serif;
    font-size: 10px;
    font-style: italic;
}

/* Tabellenblatt */
.sheet {
    flex: 1;
    min-height: 0;
    display: flex;
    background-color: #fff;
}
.grid-area {
    flex: 1;
    border-right: 1px solid #aaa;
}
.grid {
    width: 100%;
    height: 100%;
    table-layout: fixed;
    border-collapse: separate;
    border-spacing: 0;
    color: #111;
    font-family: Lato, "Open Sans", sans-serif;
    font-size: 14px;
    line-height: 18px;
}
.grid th, .grid td {
    padding: 0;
}
.grid th {
    border-right: 1px solid #aaa;
    border-bottom: 1px solid #e3e3e3;
    color: #444;
    font-family: "Noto Sans", "Open Sans", sans-serif;
    font-size: 13px;
    font-weight: 400;
    text-align: center;
}
.col-num { width: 29px; }
.col-a { width: 114px; }
.col-b { width: 95px; }
.col-c { width: 137px; }
.col-d { width: 100px; }
.col-rest { width: 22px; }
.grid .letters th {
    height: 20px;
    border-right-color: #e3e3e3;
    border-bottom-color: #aaa;
}
.grid .letters .corner {
    background: linear-gradient(135deg, transparent 50%, #d5d5d5 50%) 12px 4px / 14px 13px no-repeat;
}
.grid .letters .sel {
    background-color: #e1e1e1;
    border-bottom: 2px solid #217346;
    color: #3f6b52;
}
.first {
    height: 21px;
}
.head {
    height: 54px;
}
.grid .head th {
    padding-bottom: 1px;
    vertical-align: bottom;
}
.grid .sel th {
    background-color: #e1e1e1;
    border-right: 2px solid #217346;
    border-bottom-color: #c8c8c8;
    color: #3f6b52;
}
.grid .above {
    border-bottom: 1px solid #222;
}
.grid .edge {
    border-right: 1px solid #222;
}
.grid .title {
    position: relative;
    background-color: #00b050;
    border-right: 1px solid #222;
    border-bottom: 1px solid #222;
    color: #e9fbe9;
    font-weight: bold;
    text-align: center;
}
.grid .title.picked {
    border-right: 2px solid #217346;
    box-shadow: inset 1px 1px #fff, inset -1px 0 #fff;
}
.filter {
    position: absolute;
    right: 0;
    bottom: 1px;
    width: 11px;
    height: 11px;
    display: flex;
    align-items: center;
    justify-content: center;
    border: 1px solid #ccc;
    background-color: #fff;
}
.grid .name {
    border-right: 1px solid #217346;
    border-bottom: 1px solid #222;
    text-align: center;
}
.grid .value {
    position: relative;
    padding-right: 6px;
    background-color: #c6c6c6;
    border-right: 2px solid #217346;
    border-bottom: 1px solid #222;
    box-shadow: inset 1px 0 #fff;
    text-align: right;
}
.grid .value.last {
    border-bottom-color: #217346;
}
/* Ausfüllkästchen */
.value.last::after {
    content: "";
    position: absolute;
    right: -4px;
    bottom: -3px;
    width: 5px;
    height: 5px;
    border: 1px solid #fff;
    background-color: #217346;
}
.vscroll {
    width: 14px;
    display: flex;
    flex-direction: column;
    padding: 1px 2px 0;
    background-color: #f3f3f3;
}
.arrow {
    flex: none;
    width: 10px;
    height: 11px;
    display: flex;
    align-items: center;
    justify-content: center;
    border: 1px solid #bbb;
    background-color: #fff;
}
.thumb {
    border: 1px solid #bbb;
    background-color: #fff;
}
.vscroll .thumb {
    flex: 1;
    margin-bottom: 22px;
}

/* Blattregister */
.sheet-tabs {
    flex: none;
    height: 19px;
    display: flex;
    align-items: center;
    padding-right: 14px;
    background-color: #f3f3f3;
    border-top: 1px solid #aaa;
}
.sheet-nav {
    width: 66px;
    display: flex;
    gap: 15px;
    padding-left: 17px;
    opacity: .3;
}
.sheet-tab {
    height: 16px;
    margin-bottom: 2px;
    padding: 0 10px;
    border-right: 1px solid #bbb;
}
.sheet-tab.active {
    background-color: #fff;
    border-bottom: 2px solid #217346;
    color: #217346;
    font-weight: bold;
}
.add {
    margin-left: 21px;
}
.sheet-tabs .dots {
    margin: 0 9px 0 auto;
}
.hscroll {
    width: 178px;
    display: flex;
}
.hscroll .arrow, .hscroll .thumb {
    height: 10px;
}
.track {
    flex: 1;
    background-color: #e6e6e6;
}
.hscroll .thumb {
    width: 93%;
}

/* Statusleiste */
.status {
    flex: none;
    height: 14px;
    display: flex;
    align-items: center;
    padding: 0 5px;
    background-color: #217346;
    color: #fff;
    font-size: 7px;
}
.macro {
    margin-left: 29px;
}
.stats {
    display: flex;
    gap: 14px;
    margin-left: auto;
}
.views {
    display: flex;
    align-self: stretch;
    margin: 0 3px 0 12px;
}
.view {
    width: 25px;
    display: flex;
    align-items: center;
    justify-content: center;
}
.view.active {
    background-color: #185c37;
}
.zoom-step {
    width: 8px;
    font-size: 9px;
    font-weight: bold;
}
.zoom {
    appearance: none;
    width: 68px;
    height: 9px;
    background: linear-gradient(#fff, #fff) center / 100% 1px no-repeat;
}
.zoom::-webkit-slider-thumb {
    appearance: none;
    width: 3px;
    height: 7px;
    background-color: #fff;
}
.percent {
    margin-left: 6px;
}
```
